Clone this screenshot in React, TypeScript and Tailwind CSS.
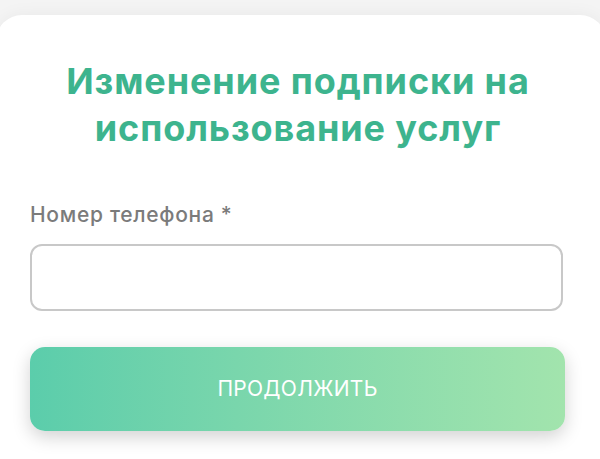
import React from "react";

export default function App() {
  return (
    <div className="w-[600px] h-[459px] overflow-hidden bg-[#f4f4f4] pt-[15px]" style={{ fontFamily: "Inter, 'Noto Sans', sans-serif" }}>
      <div className="-ml-[4px] w-[610px] h-[460px] bg-white rounded-t-[26px] shadow-[0_0_18px_rgba(0,0,0,0.05)] pt-[43px] pl-[34px] pr-[40px]">
        <h1 className="text-center text-[#3db48e] font-bold text-[36px] leading-[47px] tracking-[0.9px]">
          Изменение подписки на
          <br />
          использование услуг
        </h1>
        <div className="mt-[51px] text-[#7b7b7b] font-medium text-[21px] leading-[24px] tracking-[0.7px]">Номер телефона *</div>
        <input
          type="text"
          className="mt-[17px] block w-[533px] h-[67px] rounded-[12px] border-2 border-[#c8c8c8] bg-white outline-none px-4"
        />
        <button className="mt-[36px] flex items-center justify-center w-[535px] h-[84px] rounded-[15px] bg-gradient-to-r from-[#5bcdab] to-[#a2e4ad] text-white text-[21px] font-normal tracking-[0.3px] shadow-[0_6px_18px_rgba(0,0,0,0.18)]">
          ПРОДОЛЖИТЬ
        </button>
      </div>
    </div>
  );
}
